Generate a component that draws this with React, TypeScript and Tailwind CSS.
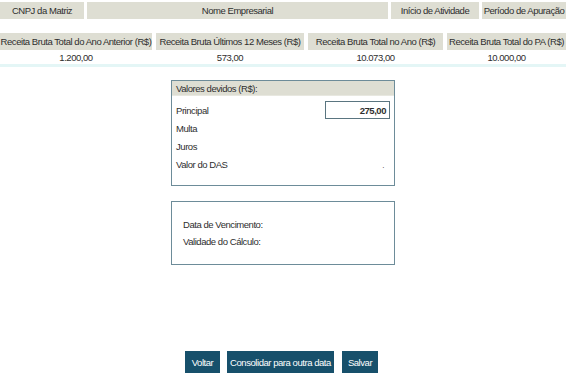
import React from "react"

const FONT = "font-['Liberation_Sans',Arial,sans-serif]"

const TOP = [
  { label: "CNPJ da Matriz", w: "w-[84px]" },
  { label: "Nome Empresarial", w: "w-[301px]" },
  { label: "Início de Atividade", w: "w-[88px]" },
  { label: "Período de Apuração", w: "flex-1" },
]

const RECEITAS = [
  { label: "Receita Bruta Total do Ano Anterior (R$)", value: "1.200,00", w: "w-[152px]" },
  { label: "Receita Bruta Últimos 12 Meses (R$)", value: "573,00", w: "w-[148px]" },
  { label: "Receita Bruta Total no Ano (R$)", value: "10.073,00", w: "w-[135px]" },
  { label: "Receita Bruta Total do PA (R$)", value: "10.000,00", w: "flex-1" },
]

export default function App() {
  return (
    <div
      className={`relative h-[378px] w-[566px] overflow-hidden bg-white text-[9.5px] leading-[11px] tracking-[-0.45px] text-[#2e2e2e] ${FONT}`}
    >
      <div className="mt-[2px] flex h-[17px] gap-[3px]">
        {TOP.map((c) => (
          <div key={c.label} className={`${c.w} flex items-center justify-center whitespace-nowrap bg-[#deded3]`}>
            {c.label}
          </div>
        ))}
      </div>

      <div className="mt-[14px] flex gap-[4px]">
        {RECEITAS.map((c) => (
          <div key={c.label} className={`${c.w} flex flex-col`}>
            <div className="flex h-[17px] items-center justify-center whitespace-nowrap bg-[#deded3]">{c.label}</div>
            <div className="flex h-[14px] items-center justify-center">{c.value}</div>
          </div>
        ))}
      </div>
      <div className="h-[3px] bg-[#e4f6f6]" />

      <div className="ml-[171px] mt-[13px] w-[224px] border border-[#6d8c99]">
        <div className="flex h-[15px] items-center border-b border-[#e8e8e0] bg-[#deded3] px-[4px]">
          Valores devidos (R$):
        </div>
        <div className="flex flex-col px-[4px] pb-[12px] pt-[5px]">
          <div className="flex h-[18px] items-center justify-between">
            <span>Principal</span>
            <div className="flex h-[18px] w-[65px] items-center justify-end border border-[#5a7580] pr-[3px] font-bold">
              275,00
            </div>
          </div>
          <div className="flex h-[18px] items-center">Multa</div>
          <div className="flex h-[18px] items-center">Juros</div>
          <div className="flex h-[18px] items-center justify-between">
            <span>Valor do DAS</span>
            <span className="pr-[6px] pt-[3px] text-[8px]">.</span>
          </div>
        </div>
      </div>

      <div className="ml-[171px] mt-[15px] flex h-[64px] w-[224px] flex-col justify-center gap-[6px] border border-[#6d8c99] pl-[11px]">
        <div>Data de Vencimento:</div>
        <div>Validade do Cálculo:</div>
      </div>

      <div className="ml-[185px] mt-[86px] flex gap-[7px]">
        <button className="flex h-[22px] w-[35px] items-center justify-center bg-[#17506b] text-white">Voltar</button>
        <button className="flex h-[22px] w-[107px] items-center justify-center bg-[#17506b] text-white">
          Consolidar para outra data
        </button>
        <button className="ml-[1px] flex h-[22px] w-[36px] items-center justify-center bg-[#17506b] text-white">
          Salvar
        </button>
      </div>
    </div>
  )
}
